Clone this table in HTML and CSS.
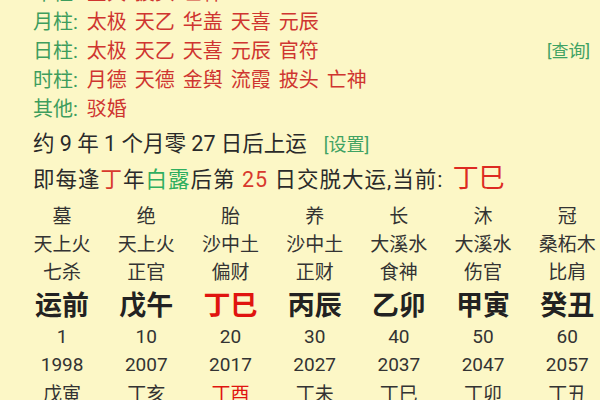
FILE: index.html
```html
<!DOCTYPE html>
<html lang="zh">
<head>
<meta charset="utf-8">
<link rel="stylesheet" href="styles.css">
</head>
<body>
<div class="page">
  <div class="shensha">
    <div class="row"><span class="lbl">年柱:</span><span class="val">金舆 披头 亡神</span></div>
    <div class="row"><span class="lbl">月柱:</span><span class="val">太极 天乙 华盖 天喜 元辰</span></div>
    <div class="row split"><span><span class="lbl">日柱:</span><span class="val">太极 天乙 天喜 元辰 官符</span></span><span class="link">[查询]</span></div>
    <div class="row"><span class="lbl">时柱:</span><span class="val">月德 天德 金舆 流霞 披头 亡神</span></div>
    <div class="row"><span class="lbl">其他:</span><span class="val">驳婚</span></div>
  </div>
  <div class="yun">
    <div class="line">约 9 年 1 个月零 27 日后上运<span class="link sm">[设置]</span></div>
    <div class="line wide">即每逢<span class="red">丁</span>年<span class="green">白露</span>后第 <span class="red">25</span> 日交脱大运,当前: <span class="cur">丁巳</span></div>
  </div>
  <div class="dayun">
    <div>墓</div><div>绝</div><div>胎</div><div>养</div><div>长</div><div>沐</div><div>冠</div>
    <div>天上火</div><div>天上火</div><div>沙中土</div><div>沙中土</div><div>大溪水</div><div>大溪水</div><div>桑柘木</div>
    <div>七杀</div><div>正官</div><div>偏财</div><div>正财</div><div>食神</div><div>伤官</div><div>比肩</div>
    <div class="gz">运前</div><div class="gz">戊午</div><div class="gz hot">丁巳</div><div class="gz">丙辰</div><div class="gz">乙卯</div><div class="gz">甲寅</div><div class="gz">癸丑</div>
    <div>1</div><div>10</div><div>20</div><div>30</div><div>40</div><div>50</div><div>60</div>
    <div>1998</div><div>2007</div><div>2017</div><div>2027</div><div>2037</div><div>2047</div><div>2057</div>
    <div>戊寅</div><div>丁亥</div><div class="hot">丁酉</div><div>丁未</div><div>丁巳</div><div>丁卯</div><div>丁丑</div>
  </div>
</div>
</body>
</html>
```

FILE: styles.css
```css
html, body {
  margin: 0;
  padding: 0;
  width: 600px;
  height: 400px;
  overflow: hidden;
  background: #fcf7c6;
}

.page {
  font-family: Roboto, "Noto Sans CJK SC", sans-serif;
  color: #2a2a2a;
}

.shensha {
  margin-top: -21px;
  padding: 0 10px 0 33px;
  font-size: 20px;
}

.row {
  height: 29px;
  line-height: 29px;
  white-space: nowrap;
}

.row.split {
  display: flex;
  justify-content: space-between;
}

.lbl {
  color: #3e9d5d;
  margin-right: 9px;
}

.val {
  color: #cf3530;
  word-spacing: 3px;
}

.link {
  color: #3fa263;
  font-size: 17px;
}

.link.sm {
  font-size: 18px;
  margin-left: 17px;
}

.yun {
  margin-top: 2px;
  padding-left: 33px;
  font-size: 21.5px;
  color: #2a2a2a;
}

.line {
  height: 35px;
  line-height: 35px;
  white-space: nowrap;
}

.line.wide {
  letter-spacing: 1px;
}

.red {
  color: #d8392e;
}

.green {
  color: #2fae5f;
}

.cur {
  color: #dd2a22;
  font-size: 26px;
  margin-left: 3px;
  letter-spacing: 0;
}

.dayun {
  margin-top: 4px;
  padding-left: 20px;
  display: grid;
  grid-template-columns: repeat(7, 84.2px);
  grid-template-rows: 28px 28px 28px 38px 28px 28px 28px;
  font-size: 19px;
  color: #333;
  text-align: center;
}

.dayun > div {
  display: flex;
  align-items: center;
  justify-content: center;
  white-space: nowrap;
}

.dayun .gz {
  font-size: 27px;
  font-weight: bold;
  color: #222;
}

.dayun .hot {
  color: #e0140f;
}
```
